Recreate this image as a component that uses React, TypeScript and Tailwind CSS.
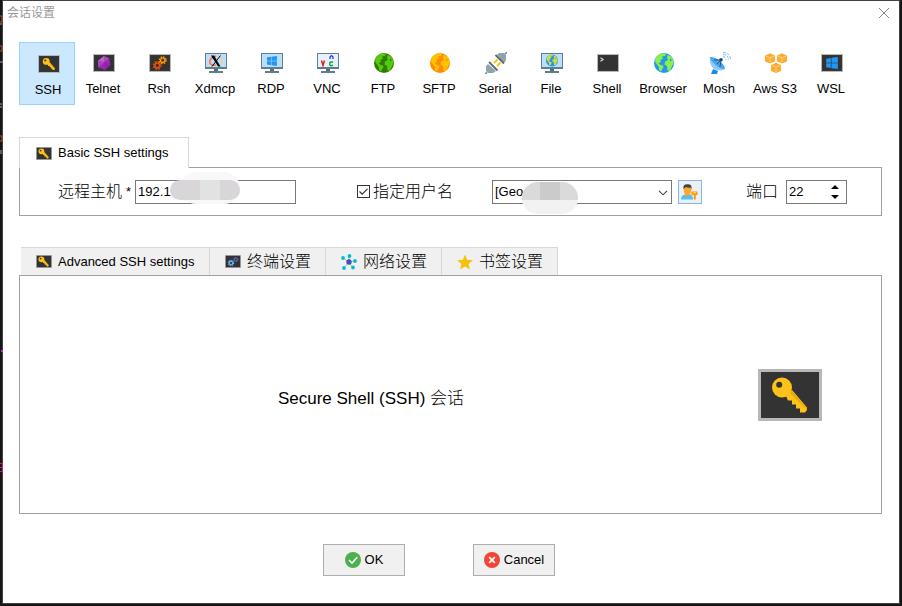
import { useState } from "react";
import type { ReactNode } from "react";

const cjk = "font-['Liberation_Sans','Noto_Sans_CJK_SC',sans-serif]";

function DarkFrame({ className, children }: { className: string; children?: ReactNode }) {
  return (
    <svg viewBox="0 0 64 52" preserveAspectRatio="none" className={className} aria-hidden="true">
      <rect width="64" height="52" fill="#b8b8b8" />
      <rect x="3" y="3" width="58" height="46" fill="#333" />
      {children}
    </svg>
  );
}

function KeyShape() {
  return (
    <>
      <path d="M28 27L34 21L49 38.5V41L47 43.5H42V39.5H38V35.5H34V31.5H30Z" fill="#ffc21a" />
      <path d="M32 24L34 22L49 39V41Z" fill="#eda900" />
      <circle cx="24" cy="18.5" r="10" fill="#ffc21a" />
      <circle cx="21.2" cy="15.8" r="3" fill="#333" />
    </>
  );
}

function KeyIcon({ className }: { className: string }) {
  return (
    <DarkFrame className={className}>
      <KeyShape />
    </DarkFrame>
  );
}

function SmallKeyIcon() {
  return (
    <DarkFrame className="h-[13px] w-4">
      <g transform="translate(-6 -4) scale(1.15)">
        <KeyShape />
      </g>
    </DarkFrame>
  );
}

function Monitor({ children }: { children: ReactNode }) {
  return (
    <svg viewBox="0 0 22 20" className="h-5 w-[22px]" aria-hidden="true">
      <rect width="22" height="16" fill="#607d8b" />
      <rect x="1" y="1" width="20" height="13" fill="#bbdefb" />
      <rect x="9" y="16" width="4" height="2" fill="#546e7a" />
      <path d="M4 18H18V20H4Z" fill="#607d8b" />
      {children}
    </svg>
  );
}

function GlobeShape({ sea, land }: { sea: string; land: string }) {
  return (
    <>
      <circle cx="10" cy="10" r="10" fill={sea} />
      <path d="M3 3Q6 0 10 0.3L12 1L11 3L8 3.5L9 5.5L6.5 7L7 9L4.5 10L6.5 12L9 12.5L9.5 14L7 18.5L5 17L5 14L1.5 9.5L1 6Z" fill={land} />
      <path d="M13.5 2L17 3.5Q19.6 6.5 19.7 10L18 13L16 18L13.5 17.5L13 13L10.5 11.5L11 8.5L14 7L13 5Z" fill={land} />
      <path d="M16 5.5L18 7L16 8.5Z" fill={sea} />
    </>
  );
}

function Globe({ sea, land }: { sea: string; land: string }) {
  return (
    <svg viewBox="0 0 20 20" className="size-5" aria-hidden="true">
      <GlobeShape sea={sea} land={land} />
    </svg>
  );
}

function Gear({ x, y, r, color, hole }: { x: number; y: number; r: number; color: string; hole: string }) {
  return (
    <g>
      <circle cx={x} cy={y} r={r} fill="none" stroke={color} strokeWidth={r * 0.6} strokeDasharray={`${r * 0.45} ${r * 0.335}`} />
      <circle cx={x} cy={y} r={r * 0.9} fill={color} />
      <circle cx={x} cy={y} r={r * 0.45} fill={hole} />
    </g>
  );
}

function WindowsShape() {
  return (
    <path d="M0 1.5L4.4 .8V5.2H0ZM5 .7L11 0V5.2H5ZM0 5.8H4.4V10.2L0 9.5ZM5 5.8H11V11L5 10.3Z" fill="#2196f3" />
  );
}

function Cube({ x, y }: { x: number; y: number }) {
  return (
    <g transform={`translate(${x} ${y})`}>
      <path d="M0 2.5L5 .3L10 2.5V8.5L5 10.5L0 8.5Z" fill="#ffab32" />
      <path d="M1 3L5 4.800L9 3M5 5V9.500" stroke="#ffdc9e" strokeWidth=".8" fill="none" />
    </g>
  );
}

const sessions: { name: string; icon: ReactNode }[] = [
  { name: "SSH", icon: <KeyIcon className="h-[18px] w-[22px]" /> },
  {
    name: "Telnet",
    icon: (
      <DarkFrame className="h-[18px] w-[22px]">
        <path d="M32 6L47 13L51 30L35 46L16 39L14 20Z" fill="#9c27b0" />
        <path d="M32 6L14 20L33 23Z" fill="#ba68c8" />
        <path d="M32 6L47 13L33 23Z" fill="#ab47bc" />
        <path d="M33 23L51 30L35 46Z" fill="#8e24aa" />
        <path d="M14 20L33 23L16 39Z" fill="#ab47bc" />
      </DarkFrame>
    ),
  },
  {
    name: "Rsh",
    icon: (
      <DarkFrame className="h-[18px] w-[22px]">
        <Gear x={24} y={33} r={10} color="#e65100" hole="#333" />
        <Gear x={40} y={18} r={9} color="#ff9800" hole="#333" />
      </DarkFrame>
    ),
  },
  {
    name: "Xdmcp",
    icon: (
      <Monitor>
        <path d="M11 3Q4 5 5 10Q6 13 11 12" fill="none" stroke="#ff7043" strokeWidth="1.6" />
        <path d="M15 4Q19 7 15 12" fill="none" stroke="#ffcc80" strokeWidth="1.2" />
        <path d="M6 2.5H9L15.5 13.5H13Z" fill="#000" />
        <path d="M15.5 2.5L7 13.5" stroke="#000" strokeWidth="1" />
      </Monitor>
    ),
  },
  { name: "RDP", icon: <Monitor><g transform="translate(6 3) scale(.9)"><WindowsShape /></g></Monitor> },
  {
    name: "VNC",
    icon: (
      <Monitor>
        <rect x="1" y="1" width="20" height="13" fill="#e3f2fd" />
        <path d="M4.5 7.5L6 12.5L7.5 7.5" fill="none" stroke="#e51c23" strokeWidth="1.5" />
        <path d="M13 6V4Q14.5 1.5 16 4V6" fill="none" stroke="#2a36ff" strokeWidth="1.3" />
        <path d="M16 9.3Q12.5 8 12.7 11Q13 13.5 16 12.3" fill="none" stroke="#12a32a" strokeWidth="1.5" />
      </Monitor>
    ),
  },
  { name: "FTP", icon: <Globe sea="#2e7d00" land="#56c810" /> },
  { name: "SFTP", icon: <Globe sea="#ff8a00" land="#ffc400" /> },
  {
    name: "Serial",
    icon: (
      <svg viewBox="0 0 22 22" className="size-[22px]" aria-hidden="true">
        <path d="M2 20.5L0 22M20 2L22 0" stroke="#78909c" strokeWidth="1.6" />
        <path d="M9 11L12.500 7.500M12 14L15.500 10.500" stroke="#ffc107" strokeWidth="2" />
        <path d="M3 12L11 19L8 21H3L1 19V14Z" fill="#90a4ae" />
        <path d="M12 3L14 1H19L21 3V8L19 11Z" fill="#90a4ae" />
        <path d="M4 10L12.500 18.500M10.500 3L19 11.500" stroke="#546e7a" strokeWidth="1.8" />
      </svg>
    ),
  },
  {
    name: "File",
    icon: <Monitor><g transform="translate(5 1.5) scale(.6)"><GlobeShape sea="#2196f3" land="#cddc39" /></g></Monitor>,
  },
  {
    name: "Shell",
    icon: (
      <DarkFrame className="h-[18px] w-[22px]">
        <path d="M10 11L18 16L10 21" fill="none" stroke="#e0e0e0" strokeWidth="3" />
      </DarkFrame>
    ),
  },
  { name: "Browser", icon: <Globe sea="#2196f3" land="#8bef4a" /> },
  {
    name: "Mosh",
    icon: (
      <svg viewBox="0 0 22 22" className="size-[22px]" aria-hidden="true">
        <path d="M4 17L9 19L8 22H2Z" fill="#1e88e5" />
        <path d="M1 5Q0 13 5 17Q11 20 16 17Z" fill="#90caf9" />
        <path d="M1 5Q7 5 12 10Q16 14 16 17Q10 17 5.500 12Q1 8 1 5Z" fill="#42a5f5" />
        <path d="M5 8L12 8L11 15" fill="none" stroke="#3f5365" strokeWidth="1" />
        <path d="M8 12L12 8" stroke="#3f5365" />
        <circle cx="12" cy="7.800" r="1.800" fill="#0d47a1" />
        <path d="M14 4.500Q17 5 17 8M14 2.300Q19.500 3 19.500 8M14 .3Q21.500 1 21.500 8" fill="none" stroke="#64a9dc" strokeWidth=".8" strokeDasharray="3 1" />
      </svg>
    ),
  },
  {
    name: "Aws S3",
    icon: (
      <svg viewBox="0 0 22 20" className="h-5 w-[22px]" aria-hidden="true">
        <Cube x={0} y={0} />
        <Cube x={12} y={0} />
        <Cube x={6} y={9.500} />
      </svg>
    ),
  },
  {
    name: "WSL",
    icon: (
      <DarkFrame className="h-[18px] w-[22px]">
        <g transform="translate(15 9) scale(3.1)"><WindowsShape /></g>
      </DarkFrame>
    ),
  },
];

const tabs: { name: string; icon: ReactNode; style: string }[] = [
  { name: "Advanced SSH settings", icon: <SmallKeyIcon />, style: "w-[189px] text-[13px]" },
  {
    name: "终端设置",
    icon: (
      <DarkFrame className="h-[13px] w-4">
        <Gear x={24} y={32} r={10} color="#64b5f6" hole="#333" />
        <Gear x={43} y={18} r={8} color="#5c6bc0" hole="#333" />
      </DarkFrame>
    ),
    style: "w-[116px] text-base font-light",
  },
  {
    name: "网络设置",
    icon: (
      <svg viewBox="0 0 16 16" className="size-4" aria-hidden="true">
        <path d="M8 8L2 4M8 8V2M8 8L14 7M8 8L12 14M8 8L3 14" stroke="#b0bec5" />
        <circle cx="8" cy="8" r="2.700" fill="#3f51b5" />
        <g fill="#00bcd4">
          <circle cx="2" cy="4" r="1.900" /><circle cx="8.500" cy="2" r="1.900" /><circle cx="14" cy="7" r="1.900" />
          <circle cx="12" cy="13.500" r="1.900" /><circle cx="3" cy="14" r="1.900" />
        </g>
      </svg>
    ),
    style: "w-[116px] text-base font-light",
  },
  {
    name: "书签设置",
    icon: (
      <svg viewBox="0 0 16 16" className="size-4" aria-hidden="true">
        <path d="M8 .5L10.200 5.800L16 6.200L11.500 9.900L13 15.500L8 12.400L3 15.500L4.500 9.900L0 6.200L5.800 5.800Z" fill="#f4c20d" />
      </svg>
    ),
    style: "w-[116px] text-base font-light",
  },
];

function BackdropEdge() {
  return (
    <svg className="absolute left-0 top-0 h-[606px] w-[3px]" aria-hidden="true">
      <path d="M0 16H2V22H0M0 46H2V51H0" fill="none" stroke="#b5532a" />
      <path d="M0 24H2M0 62H3M0 104H2M0 107H2M0 151H2M0 153H2" stroke="#a9a9a9" />
      <path d="M0 136H2V141H0" fill="none" stroke="#b5532a" />
      <path d="M1 351H3" stroke="#a63ad0" strokeWidth="2" />
      <path d="M0 463.500H2.500V471.500H0M0 467.500H2" fill="none" stroke="#c0267a" />
    </svg>
  );
}

export default function App() {
  const [session, setSession] = useState("SSH");
  const [host, setHost] = useState("192.1");
  const [port, setPort] = useState(22);
  const [withUser, setWithUser] = useState(true);

  return (
    <div className="relative flex min-h-screen bg-[#161616] pr-[2px] pb-[2px] pl-[2px]">
      <BackdropEdge />
      <main className={`${cjk} flex min-w-0 flex-1 flex-col border border-[#414141] bg-white text-[13px] text-black`}>
        <header className="flex h-6 items-center justify-between pr-[9px] pl-1">
          <h1 className="text-xs text-[#999]">会话设置</h1>
          <button type="button" aria-label="关闭" className="flex size-3 items-center justify-center">
            <svg viewBox="0 0 12 12" className="size-3" aria-hidden="true">
              <path d="M1 1L11 11M11 1L1 11" stroke="#888" strokeWidth="1" />
            </svg>
          </button>
        </header>

        <nav className="mt-[17px] flex flex-wrap px-4" aria-label="Session type">
          {sessions.map(({ name, icon }) => (
            <button
              key={name}
              type="button"
              aria-pressed={session === name}
              onClick={() => setSession(name)}
              className={`flex h-[63px] w-14 flex-col items-center gap-[6px] border whitespace-nowrap ${
                session === name ? "border-[#99d1ff] bg-[#cce8ff] pt-[9px] pl-[2px]" : "border-transparent pt-2"
              }`}
            >
              <span className="flex h-6 items-center pl-[2px]">{icon}</span>
              <span className="leading-4">{name}</span>
            </button>
          ))}
        </nav>

        <section className="mt-8 mr-[17px] ml-4">
          <h2 className="relative z-10 -mb-px flex h-[31px] w-[170px] items-center gap-[6px] border border-b-0 border-[#d9d9d9] bg-white pl-4">
            <SmallKeyIcon />
            Basic SSH settings
          </h2>
          <div className="flex h-[49px] items-center border border-[#a0a0a0] pr-[34px] pl-[38px]">
            <label htmlFor="host" className="flex items-center gap-1 pr-1">
              <span className="text-base font-light">远程主机</span>
              <span>*</span>
            </label>
            <div className="relative">
              <input
                id="host"
                value={host}
                onChange={(e) => setHost(e.target.value)}
                className="block h-6 w-[161px] border border-[#7a7a7a] px-[2px] outline-none"
              />
              <span className="absolute -top-2 left-[45px] h-8 w-[60px] rounded-2xl bg-[#f8f8f8]" />
              <span className="absolute top-0 left-[35px] flex h-5 w-[70px] overflow-hidden rounded-[10px] bg-[#d8d6d8]">
                <span className="ml-[30px] w-5 bg-[#e0e3e2]" />
              </span>
            </div>

            <label className="ml-[61px] flex items-center gap-[3px]">
              <span className="grid size-[13px]">
                <input
                  type="checkbox"
                  checked={withUser}
                  onChange={(e) => setWithUser(e.target.checked)}
                  className="peer size-[13px] appearance-none border border-[#333] bg-white [grid-area:1/1]"
                />
                <svg viewBox="0 0 13 13" className="pointer-events-none invisible size-[13px] peer-checked:visible [grid-area:1/1]" aria-hidden="true">
                  <path d="M2.500 6.500L5.200 9.200L10.500 3.800" fill="none" stroke="#333" strokeWidth="1.200" />
                </svg>
              </span>
              <span className="text-base font-light">指定用户名</span>
            </label>

            <div className="relative ml-auto">
              <select aria-label="用户名" className="block h-6 w-[180px] appearance-none border border-[#7a7a7a] bg-white px-[2px] outline-none">
                <option>[Geo</option>
              </select>
              <svg viewBox="0 0 10 6" className="pointer-events-none absolute top-[10px] right-1 h-[6px] w-[10px]" aria-hidden="true">
                <path d="M1 .8L5 4.800L9 .8" fill="none" stroke="#444" strokeWidth="1.100" />
              </svg>
              <span className="absolute top-[2px] left-[30px] flex h-8 w-14 flex-col overflow-hidden rounded-2xl bg-[#f2f2f2]">
                <span className="flex h-[18px] bg-[#dadada]">
                  <span className="ml-[18px] w-5 bg-[#cbcbcb]" />
                </span>
              </span>
            </div>
            <button type="button" aria-label="用户凭据" className="ml-[6px] flex size-6 items-center justify-center border border-[#84b5f7] bg-[#efefef]">
              <svg viewBox="0 0 17 16" className="h-4 w-[17px]" aria-hidden="true">
                <path d="M0 15.500Q0 11 4 10.500H9Q12 11 12 15.500Z" fill="#4fc3f7" />
                <path d="M4 10L6.500 13L9 10Z" fill="#ff9800" />
                <ellipse cx="6.500" cy="6.500" rx="3.700" ry="5" fill="#ffa726" />
                <path d="M2.500 5.500Q1.500 0 6.500 .2Q11.500 0 10.500 5.500L9.500 3.500Q7 4 5 3L3 4.500Z" fill="#424242" />
                <path d="M10.500 7.500H16.500V11H14.800V15.500H12.800V11H10.500Z" fill="#f99a0c" />
                <path d="M12.500 8.800H14.800" stroke="#fff" strokeWidth=".8" />
              </svg>
            </button>

            <label htmlFor="port" className="ml-11 text-base font-light">端口</label>
            <div className="ml-2 flex h-6 w-[61px] items-center border border-[#7a7a7a]">
              <input
                id="port"
                inputMode="numeric"
                value={port}
                onChange={(e) => setPort(Number(e.target.value) || 0)}
                className="h-5 min-w-0 flex-1 px-[2px] outline-none"
              />
              <span className="mr-[7px] flex flex-col gap-[6px]">
                <button type="button" aria-label="增加端口" onClick={() => setPort(port + 1)}>
                  <svg viewBox="0 0 8 4" className="block h-1 w-2" aria-hidden="true"><path d="M4 0L8 4H0Z" /></svg>
                </button>
                <button type="button" aria-label="减少端口" onClick={() => setPort(port - 1)}>
                  <svg viewBox="0 0 8 4" className="block h-1 w-2" aria-hidden="true"><path d="M0 0H8L4 4Z" /></svg>
                </button>
              </span>
            </div>
          </div>
        </section>

        <section className="mt-[31px] mr-[17px] ml-4 flex flex-1 flex-col">
          <div className="flex border-l-2 border-white">
            {tabs.map(({ name, icon, style }) => (
              <button
                key={name}
                type="button"
                className={`flex h-7 items-center gap-[6px] border-t border-r border-[#d9d9d9] bg-[#f0f0f0] pl-[15px] whitespace-nowrap ${style}`}
              >
                {icon}
                {name}
              </button>
            ))}
          </div>
          <div className="flex min-h-[120px] flex-1 items-center border border-[#a0a0a0] pr-[59px]">
            <p className="flex-1 pt-2 pr-9 text-center text-[17px]">
              Secure Shell (SSH) <span className="font-light">会话</span>
            </p>
            <KeyIcon className="h-[52px] w-16" />
          </div>
        </section>

        <footer className="flex justify-center gap-[68px] pt-[30px] pr-6 pb-[27px]">
          <button type="button" className="flex h-8 w-[82px] items-center justify-center gap-1 border border-[#adadad] bg-[#f0f0f0]">
            <svg viewBox="0 0 16 16" className="size-4" aria-hidden="true">
              <circle cx="8" cy="8" r="8" fill="#4caf50" />
              <path d="M4 8L7 11L12.300 5.300" fill="none" stroke="#fff" strokeWidth="1.600" />
            </svg>
            OK
          </button>
          <button type="button" className="flex h-8 w-[82px] items-center justify-center gap-1 border border-[#adadad] bg-[#f0f0f0]">
            <svg viewBox="0 0 16 16" className="size-4" aria-hidden="true">
              <circle cx="8" cy="8" r="8" fill="#f44336" />
              <path d="M5.200 5.200L10.800 10.800M10.800 5.200L5.200 10.800" stroke="#fff" strokeWidth="1.800" />
            </svg>
            Cancel
          </button>
        </footer>
      </main>
    </div>
  );
}
